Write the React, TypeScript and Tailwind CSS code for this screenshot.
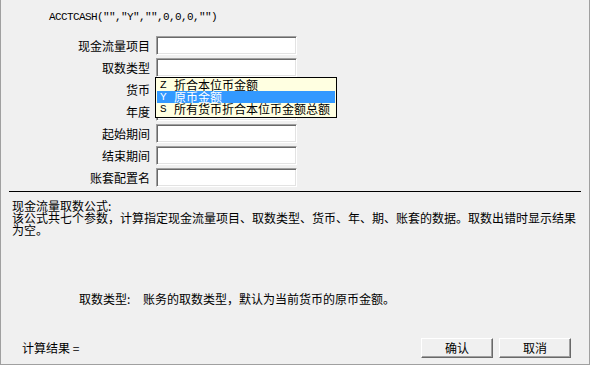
const FIELDS = [
  "现金流量项目",
  "取数类型",
  "货币",
  "年度",
  "起始期间",
  "结束期间",
  "账套配置名",
];

const OPTIONS = [
  { key: "Z", label: "折合本位币金额" },
  { key: "Y", label: "原币金额", selected: true },
  { key: "S", label: "所有货币折合本位币金额总额" },
];

const cjk = "font-['SimSun','Noto_Sans_CJK_SC',sans-serif]";
const mono = "font-['Liberation_Mono','Noto_Sans_CJK_SC',monospace]";

const Button = ({ label }: { label: string }) => (
  <button
    className={`w-[72px] h-[20px] bg-[#f0f0f0] border border-t-white border-l-white border-r-[#696969] border-b-[#696969] shadow-[inset_-1px_-1px_0_#a0a0a0] text-[12px] leading-none text-black ${cjk}`}
  >
    {label}
  </button>
);

export default function App() {
  return (
    <div
      className={`relative w-[590px] h-[365px] bg-[#f0f0f0] border-x border-b border-[#a0a0a0] flex flex-col text-[12px] text-black ${cjk}`}
    >
      {/* FORMULA PREVIEW */}
      <div className={`pl-[48px] pt-[10px] h-[24px] leading-[14px] text-[11px] tracking-[-0.6px] ${mono}`}>
        ACCTCASH("","Y","",0,0,0,"")
      </div>

      {/* PARAMETER FIELDS */}
      <div className="mt-[12px] flex flex-col gap-[3px]">
        {FIELDS.map((label) => (
          <div key={label} className="flex items-center h-[19px]">
            <span className="w-[149px] text-right leading-[19px]">{label}</span>
            <div className="ml-[6px] w-[141px] h-[19px] bg-white border border-t-[#a0a0a0] border-l-[#a0a0a0] border-r-white border-b-white shadow-[inset_1px_1px_0_#696969,inset_-1px_-1px_0_#e3e3e3]" />
          </div>
        ))}
      </div>

      {/* SEPARATOR */}
      <div className="mt-[4px] ml-[8px] w-[572px] h-px bg-black" />

      {/* DESCRIPTION */}
      <div className="mt-[8px] pl-[11px] leading-[12px] whitespace-nowrap">
        <div>现金流量取数公式:</div>
        <div>该公式共七个参数，计算指定现金流量项目、取数类型、货币、年、期、账套的数据。取数出错时显示结果</div>
        <div>为空。</div>
      </div>

      <div className="mt-[57px] pl-[78px] flex leading-[12px]">
        <span className="w-[64px]">取数类型:</span>
        <span>账务的取数类型，默认为当前货币的原币金额。</span>
      </div>

      {/* RESULT + ACTIONS */}
      <div className="mt-auto mb-[6px] flex items-center h-[20px]">
        <span className="ml-[21px]">计算结果 =</span>
        <div className="ml-auto mr-[18px] flex gap-[6px]">
          <Button label="确认" />
          <Button label="取消" />
        </div>
      </div>

      {/* DROPDOWN LIST (open) */}
      <div className="absolute left-[154px] top-[77px] w-[182px] h-[41px] bg-[#ffffe1] border border-black pt-[1px]">
        {OPTIONS.map((o) => (
          <div
            key={o.key}
            className={`mx-[1px] h-[12px] flex items-center leading-[12px] ${
              o.selected ? "bg-[#3399ff] text-white" : ""
            }`}
          >
            <span className={`w-[17px] pl-[3px] ${mono} text-[11px]`}>{o.key}</span>
            <span>{o.label}</span>
          </div>
        ))}
      </div>
    </div>
  );
}
